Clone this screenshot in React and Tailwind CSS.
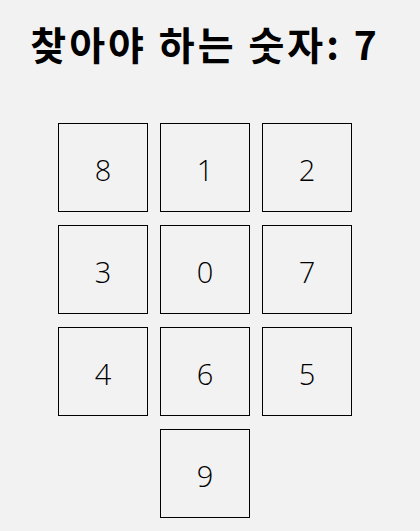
import React from "react";

const nums = [8, 1, 2, 3, 0, 7, 4, 6, 5];

export default function App() {
  return (
    <div className="min-h-[531px] w-full bg-[#f2f2f2] text-black">
      <div className="w-[410px] flex flex-col items-center">
        <h1 className="mt-[17px] h-[52px] flex items-center text-[39px] font-bold leading-none tracking-[3px] [font-family:'Noto_Sans_CJK_KR','Noto_Sans',sans-serif]">
          찾아야 하는 숫자: 7
        </h1>
        <div className="mt-[54px] grid grid-cols-[90px_90px_90px] gap-x-[12px] gap-y-[13px]">
          {nums.map((n) => (
            <div
              key={n}
              className="h-[89px] border border-black flex items-center justify-center pt-[4px] text-[29px] font-light text-black [font-family:'Open_Sans','Noto_Sans',sans-serif]"
            >
              {n}
            </div>
          ))}
          <div className="col-start-2 h-[89px] border border-black flex items-center justify-center pt-[4px] text-[29px] font-light text-black [font-family:'Open_Sans','Noto_Sans',sans-serif]">
            9
          </div>
        </div>
      </div>
    </div>
  );
}
